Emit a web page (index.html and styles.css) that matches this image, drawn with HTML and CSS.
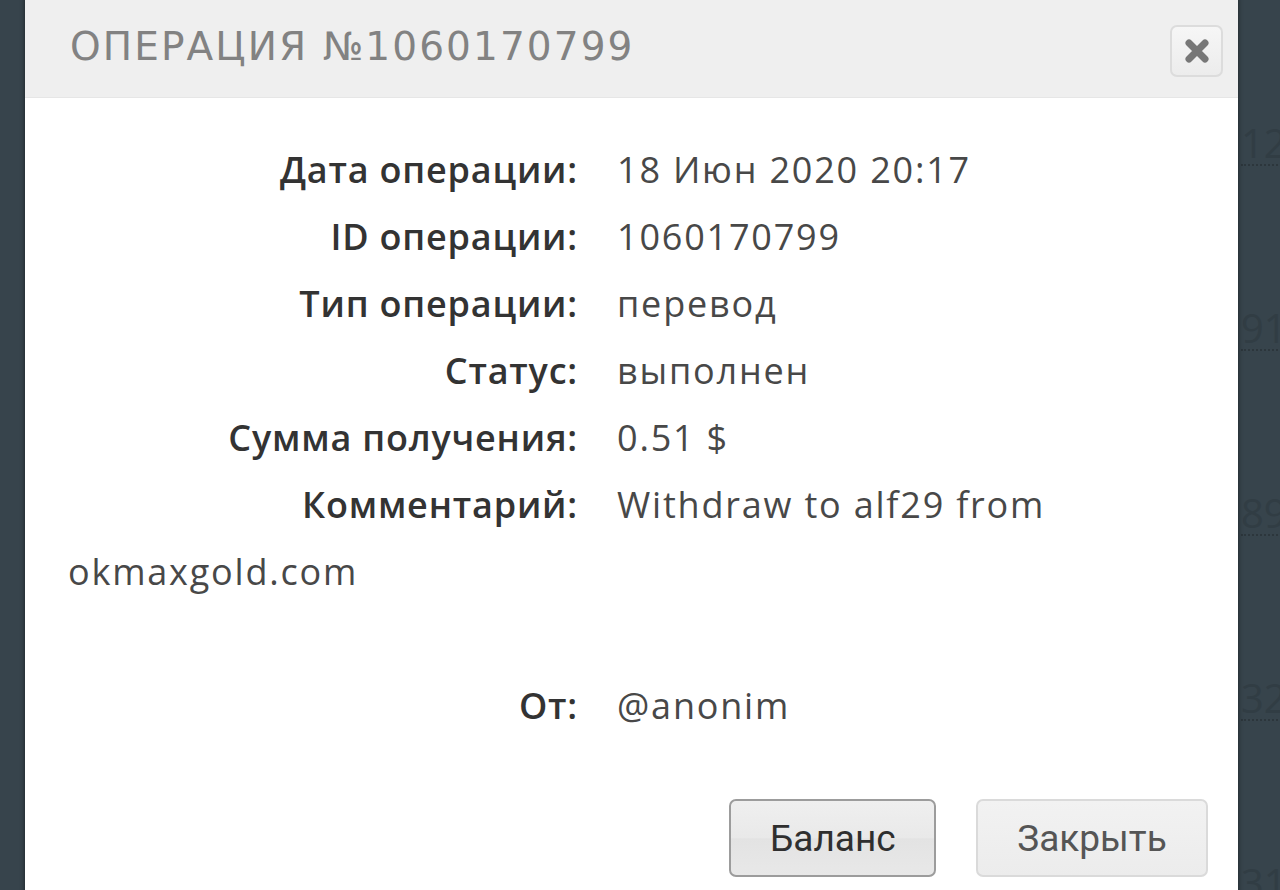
FILE: index.html
```html
<!DOCTYPE html>
<html lang="ru">
<head>
<meta charset="utf-8">
<title>Операция</title>
<link rel="stylesheet" href="styles.css">
</head>
<body>
<div class="page">
  <div class="bg-list">
    <div class="bg-row"><span class="bg-num">12</span></div>
    <div class="bg-row"><span class="bg-num">91</span></div>
    <div class="bg-row"><span class="bg-num">89</span></div>
    <div class="bg-row"><span class="bg-num">32</span></div>
    <div class="bg-row"><span class="bg-num">31</span></div>
  </div>
  <div class="modal">
    <div class="modal-head">
      <div class="modal-title">ОПЕРАЦИЯ №1060170799</div>
      <button class="close-btn" aria-label="Закрыть">
        <svg width="28" height="28" viewBox="0 0 28 28"><path d="M6 6 L22 22 M22 6 L6 22" stroke="#777" stroke-width="7" stroke-linecap="round"/></svg>
      </button>
    </div>
    <div class="modal-body">
      <div class="info">
        <div class="row"><span class="label">Дата операции:</span><span class="value">18 Июн 2020 20:17</span></div>
        <div class="row"><span class="label">ID операции:</span><span class="value">1060170799</span></div>
        <div class="row"><span class="label">Тип операции:</span><span class="value">перевод</span></div>
        <div class="row"><span class="label">Статус:</span><span class="value">выполнен</span></div>
        <div class="row"><span class="label">Сумма получения:</span><span class="value">0.51 $</span></div>
        <div class="row"><span class="label">Комментарий:</span><span class="value">Withdraw to alf29 from okmaxgold.com</span><br><br></div>
        <div class="row"><span class="label">От:</span><span class="value">@anonim</span></div>
      </div>
      <div class="actions">
        <button class="btn btn-primary">Баланс</button>
        <button class="btn btn-light">Закрыть</button>
      </div>
    </div>
  </div>
</div>
</body>
</html>
```
FILE: styles.css
```css
html, body {
  margin: 0;
  padding: 0;
}
body {
  background: #37444c;
  width: 1280px;
  height: 890px;
  overflow: hidden;
  font-family: "Open Sans", "Liberation Sans", sans-serif;
}
.page {
  position: relative;
  width: 1280px;
  height: 890px;
}
.bg-list {
  display: flex;
  flex-direction: column;
  padding-top: 124px;
  padding-left: 1241px;
}
.bg-row {
  height: 185px;
}
.bg-num {
  display: inline-block;
  font-family: "Open Sans", sans-serif;
  font-size: 40px;
  line-height: 38px;
  color: #313d44;
  border-bottom: 2px dotted #2c363c;
  padding-bottom: 2px;
  padding-right: 10px;
}
.modal {
  position: absolute;
  left: 25px;
  top: -6px;
  width: 1213px;
  height: 920px;
  background: #ffffff;
  border-radius: 6px;
  box-shadow: 0 0 5px rgba(0, 0, 0, 0.55);
  overflow: hidden;
}
.modal-head {
  height: 104px;
  background: #efefef;
  border-bottom: 1px solid #e6e6e6;
  display: flex;
  align-items: center;
  justify-content: space-between;
  padding: 0 15px 0 45px;
  box-sizing: border-box;
}
.modal-title {
  font-family: "DejaVu Sans", sans-serif;
  font-size: 39px;
  letter-spacing: 2.1px;
  color: #828282;
  margin-top: 2px;
}
.close-btn {
  width: 53px;
  height: 52px;
  margin-top: 10px;
  border: 2px solid #dcdcdc;
  border-radius: 7px;
  background: linear-gradient(#f6f6f6, #ececec);
  display: flex;
  align-items: center;
  justify-content: center;
  padding: 0;
}
.modal-body {
  padding: 38px 30px 0 43px;
}
.info {
  font-size: 36px;
  line-height: 67px;
  color: #444;
}
.row {
  width: 1120px;
}
.label {
  display: inline-block;
  width: 510px;
  text-align: right;
  font-weight: 600;
  letter-spacing: 0.8px;
  color: #333;
  margin-right: 39px;
}
.value {
  color: #484848;
  letter-spacing: 1.8px;
}
.actions {
  display: flex;
  justify-content: flex-end;
  gap: 40px;
  margin-top: 60px;
}
.btn {
  height: 78px;
  font-family: Roboto, "Liberation Sans", sans-serif;
  font-size: 37px;
  border-radius: 7px;
  padding: 0 39px;
  box-sizing: border-box;
}
.btn-primary {
  width: 207px;
  border: 2px solid #9c9c9c;
  background: linear-gradient(#efefef 0%, #e9e9e9 50%, #e3e3e3 51%, #e8e8e8 100%);
  color: #2f2f2f;
}
.btn-light {
  width: 232px;
  border: 2px solid #dadada;
  background: linear-gradient(#f2f2f2, #ececec);
  color: #555;
}
```
